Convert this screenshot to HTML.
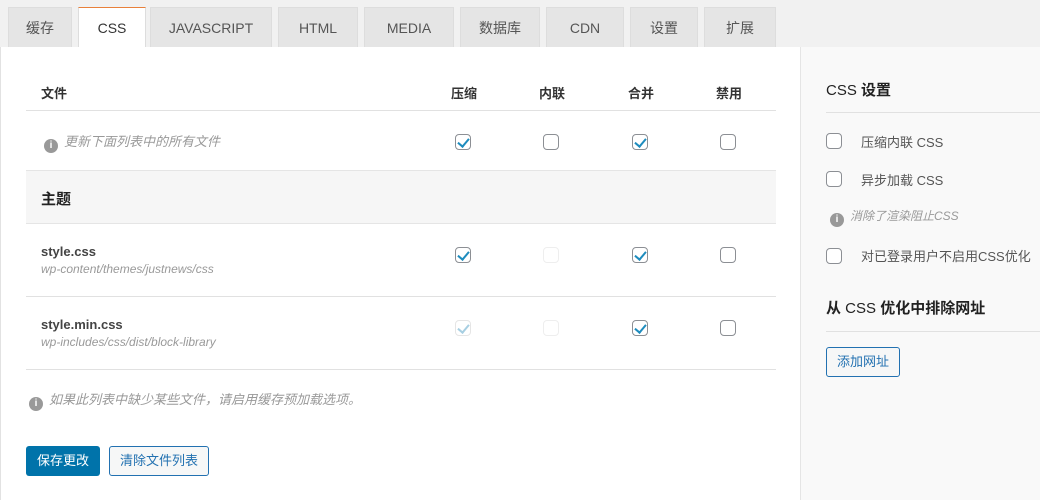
<!DOCTYPE html>
<html><head><meta charset="utf-8"><style>
*{box-sizing:border-box;margin:0;padding:0}
body{width:1040px;height:500px;overflow:hidden;background:#f1f1f1;font-family:"Liberation Sans","Noto Sans CJK SC",sans-serif;color:#444;position:relative;font-size:13px}
.a{position:absolute}
.tab{position:absolute;top:7px;height:40px;background:#e5e5e5;border:1px solid #ddd;border-bottom:none;font-size:14px;color:#555;display:flex;align-items:center;justify-content:center}
.tab.on{background:#fff;border-top:1px solid #e8803a;height:41px;color:#333}
.main{position:absolute;left:0;top:47px;width:801px;height:453px;background:#fff;border-left:1px solid #e2e2e2}
.side{position:absolute;left:800px;top:47px;width:240px;height:453px;background:#f9f9f9;border-left:1px solid #e5e5e5}
.line{position:absolute;height:1px;background:#e1e1e1}
.cb{position:absolute;width:16px;height:16px;border:1px solid #8c8f94;border-radius:4px;background:#fff}
.cb.c::after{content:"";position:absolute;left:4px;top:1px;width:5px;height:9px;border:solid #1e8cbe;border-width:0 2px 2px 0;transform:rotate(40deg)}
.cb.d{border-color:#eee}
.cb.dc{border-color:#e5e5e5}
.cb.dc::after{content:"";position:absolute;left:4px;top:1px;width:5px;height:9px;border:solid #a7cfe2;border-width:0 2px 2px 0;transform:rotate(40deg)}
.i{display:inline-block;width:14px;height:14px;border-radius:50%;background:#999;color:#fff;font-size:10px;font-weight:bold;text-align:center;line-height:14px;font-style:normal;vertical-align:-2px;margin-right:6px}
.note{color:#999;font-style:italic;font-size:13px}
.th{font-size:13px;font-weight:bold;color:#333}
</style></head><body>
<div class="tab" style="left:8px;width:64px">缓存</div>
<div class="tab on" style="left:78px;width:68px">CSS</div>
<div class="tab" style="left:150px;width:122px">JAVASCRIPT</div>
<div class="tab" style="left:278px;width:80px">HTML</div>
<div class="tab" style="left:364px;width:90px">MEDIA</div>
<div class="tab" style="left:460px;width:80px">数据库</div>
<div class="tab" style="left:546px;width:78px">CDN</div>
<div class="tab" style="left:630px;width:68px">设置</div>
<div class="tab" style="left:704px;width:72px">扩展</div>

<div class="main"></div>
<div class="side"></div>

<div class="a th" style="left:41px;top:83px">文件</div>
<div class="a th" style="left:451px;top:83px">压缩</div>
<div class="a th" style="left:539px;top:83px">内联</div>
<div class="a th" style="left:628px;top:83px">合并</div>
<div class="a th" style="left:716px;top:83px">禁用</div>
<div class="line" style="left:26px;top:110px;width:750px"></div>

<div class="a note" style="left:44px;top:131px"><span class="i">i</span>更新下面列表中的所有文件</div>
<div class="cb c" style="left:455px;top:134px"></div>
<div class="cb" style="left:543px;top:134px"></div>
<div class="cb c" style="left:632px;top:134px"></div>
<div class="cb" style="left:720px;top:134px"></div>

<div class="a" style="left:26px;top:170px;width:750px;height:54px;background:#f6f6f6;border-top:1px solid #e5e5e5;border-bottom:1px solid #e5e5e5"></div>
<div class="a" style="left:41px;top:188px;font-size:15px;font-weight:bold;color:#222">主题</div>

<div class="a" style="left:41px;top:244px;font-weight:bold;color:#444">style.css</div>
<div class="a note" style="left:41px;top:262px;font-size:12px">wp-content/themes/justnews/css</div>
<div class="cb c" style="left:455px;top:247px"></div>
<div class="cb d" style="left:543px;top:247px"></div>
<div class="cb c" style="left:632px;top:247px"></div>
<div class="cb" style="left:720px;top:247px"></div>
<div class="line" style="left:26px;top:296px;width:750px"></div>

<div class="a" style="left:41px;top:317px;font-weight:bold;color:#444">style.min.css</div>
<div class="a note" style="left:41px;top:335px;font-size:12px">wp-includes/css/dist/block-library</div>
<div class="cb dc" style="left:455px;top:320px"></div>
<div class="cb d" style="left:543px;top:320px"></div>
<div class="cb c" style="left:632px;top:320px"></div>
<div class="cb" style="left:720px;top:320px"></div>
<div class="line" style="left:26px;top:369px;width:750px"></div>

<div class="a note" style="left:29px;top:389px"><span class="i">i</span>如果此列表中缺少某些文件，请启用缓存预加载选项。</div>

<div class="a" style="left:26px;top:446px;width:74px;height:30px;background:#0073aa;border-radius:3px;color:#fff;font-size:13px;line-height:30px;text-align:center">保存更改</div>
<div class="a" style="left:109px;top:446px;width:100px;height:30px;background:#f6f7f7;border:1px solid #2271b1;border-radius:3px;color:#2271b1;font-size:13px;line-height:28px;text-align:center">清除文件列表</div>

<div class="a" style="left:826px;top:79px;font-size:15px;color:#222"><span>CSS</span> <b>设置</b></div>
<div class="line" style="left:826px;top:112px;width:214px"></div>
<div class="cb" style="left:826px;top:133px"></div>
<div class="a" style="left:861px;top:132px;color:#555">压缩内联 CSS</div>
<div class="cb" style="left:826px;top:171px"></div>
<div class="a" style="left:861px;top:170px;color:#555">异步加载 CSS</div>
<div class="a note" style="left:830px;top:207px;font-size:12px"><span class="i">i</span>消除了渲染阻止CSS</div>
<div class="cb" style="left:826px;top:248px"></div>
<div class="a" style="left:861px;top:246px;color:#555">对已登录用户不启用CSS优化</div>
<div class="a" style="left:826px;top:297px;font-size:15px;color:#222"><b>从</b> CSS <b>优化中排除网址</b></div>
<div class="line" style="left:826px;top:331px;width:214px"></div>
<div class="a" style="left:826px;top:347px;width:74px;height:30px;background:#f6f7f7;border:1px solid #2271b1;border-radius:3px;color:#2271b1;font-size:13px;line-height:28px;text-align:center">添加网址</div>
</body></html>
